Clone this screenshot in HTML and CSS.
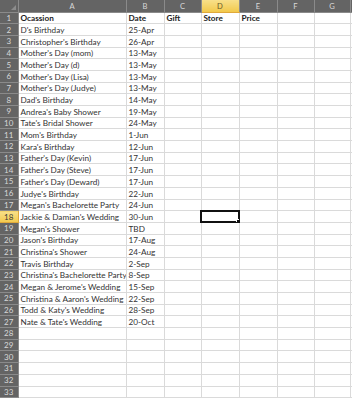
FILE: index.html
```html
<!DOCTYPE html>
<html lang="en">
<head>
    <meta charset="UTF-8">
    <title>Gift List</title>
    <link rel="stylesheet" href="styles.css">
</head>
<body>
    <table class="sheet">
        <colgroup>
            <col class="c-rh"><col class="c-a"><col class="c-b"><col class="c-c"><col class="c-d">
            <col class="c-e"><col class="c-f"><col class="c-g"><col class="c-h">
        </colgroup>
        <thead>
            <tr>
                <th class="corner"><span class="tri"></span></th>
                <th>A</th><th>B</th><th>C</th><th class="sel">D</th><th>E</th><th>F</th><th>G</th><th class="edge"></th>
            </tr>
        </thead>
        <tbody>
            <tr class="head"><th>1</th><td>Ocassion</td><td>Date</td><td>Gift</td><td>Store</td><td>Price</td><td></td><td class="brk"></td><td></td></tr>
            <tr><th>2</th><td>D's Birthday</td><td>25-Apr</td><td></td><td></td><td></td><td></td><td class="brk"></td><td></td></tr>
            <tr><th>3</th><td>Christopher's Birthday</td><td>26-Apr</td><td></td><td></td><td></td><td></td><td class="brk"></td><td></td></tr>
            <tr><th>4</th><td>Mother's Day (mom)</td><td>13-May</td><td></td><td></td><td></td><td></td><td class="brk"></td><td></td></tr>
            <tr><th>5</th><td>Mother's Day (d)</td><td>13-May</td><td></td><td></td><td></td><td></td><td class="brk"></td><td></td></tr>
            <tr><th>6</th><td>Mother's Day (Lisa)</td><td>13-May</td><td></td><td></td><td></td><td></td><td class="brk"></td><td></td></tr>
            <tr><th>7</th><td>Mother's Day (Judye)</td><td>13-May</td><td></td><td></td><td></td><td></td><td class="brk"></td><td></td></tr>
            <tr><th>8</th><td>Dad's Birthday</td><td>14-May</td><td></td><td></td><td></td><td></td><td class="brk"></td><td></td></tr>
            <tr><th>9</th><td>Andrea's Baby Shower</td><td>19-May</td><td></td><td></td><td></td><td></td><td class="brk"></td><td></td></tr>
            <tr><th>10</th><td>Tate's Bridal Shower</td><td>24-May</td><td></td><td></td><td></td><td></td><td class="brk"></td><td></td></tr>
            <tr><th>11</th><td>Mom's Birthday</td><td>1-Jun</td><td></td><td></td><td></td><td></td><td class="brk"></td><td></td></tr>
            <tr><th>12</th><td>Kara's Birthday</td><td>12-Jun</td><td></td><td></td><td></td><td></td><td class="brk"></td><td></td></tr>
            <tr><th>13</th><td>Father's Day (Kevin)</td><td>17-Jun</td><td></td><td></td><td></td><td></td><td class="brk"></td><td></td></tr>
            <tr><th>14</th><td>Father's Day (Steve)</td><td>17-Jun</td><td></td><td></td><td></td><td></td><td class="brk"></td><td></td></tr>
            <tr><th>15</th><td>Father's Day (Deward)</td><td>17-Jun</td><td></td><td></td><td></td><td></td><td class="brk"></td><td></td></tr>
            <tr><th>16</th><td>Judye's Birthday</td><td>22-Jun</td><td></td><td></td><td></td><td></td><td class="brk"></td><td></td></tr>
            <tr><th>17</th><td>Megan's Bachelorette Party</td><td>24-Jun</td><td></td><td></td><td></td><td></td><td class="brk"></td><td></td></tr>
            <tr><th class="sel">18</th><td>Jackie &amp; Damian's Wedding</td><td>30-Jun</td><td></td><td class="active"></td><td></td><td></td><td class="brk"></td><td></td></tr>
            <tr><th>19</th><td>Megan's Shower</td><td>TBD</td><td></td><td></td><td></td><td></td><td class="brk"></td><td></td></tr>
            <tr><th>20</th><td>Jason's Birthday</td><td>17-Aug</td><td></td><td></td><td></td><td></td><td class="brk"></td><td></td></tr>
            <tr><th>21</th><td>Christina's Shower</td><td>24-Aug</td><td></td><td></td><td></td><td></td><td class="brk"></td><td></td></tr>
            <tr><th>22</th><td>Travis Birthday</td><td>2-Sep</td><td></td><td></td><td></td><td></td><td class="brk"></td><td></td></tr>
            <tr><th>23</th><td>Christina's Bachelorette Party</td><td>8-Sep</td><td></td><td></td><td></td><td></td><td class="brk"></td><td></td></tr>
            <tr><th>24</th><td>Megan &amp; Jerome's Wedding</td><td>15-Sep</td><td></td><td></td><td></td><td></td><td class="brk"></td><td></td></tr>
            <tr><th>25</th><td>Christina &amp; Aaron's Wedding</td><td>22-Sep</td><td></td><td></td><td></td><td></td><td class="brk"></td><td></td></tr>
            <tr><th>26</th><td>Todd &amp; Katy's Wedding</td><td>28-Sep</td><td></td><td></td><td></td><td></td><td class="brk"></td><td></td></tr>
            <tr><th>27</th><td>Nate &amp; Tate's Wedding</td><td>20-Oct</td><td></td><td></td><td></td><td></td><td class="brk"></td><td></td></tr>
            <tr><th>28</th><td></td><td></td><td></td><td></td><td></td><td></td><td class="brk"></td><td></td></tr>
            <tr><th>29</th><td></td><td></td><td></td><td></td><td></td><td></td><td class="brk"></td><td></td></tr>
            <tr><th>30</th><td></td><td></td><td></td><td></td><td></td><td></td><td class="brk"></td><td></td></tr>
            <tr><th>31</th><td></td><td></td><td></td><td></td><td></td><td></td><td class="brk"></td><td></td></tr>
            <tr><th>32</th><td></td><td></td><td></td><td></td><td></td><td></td><td class="brk"></td><td></td></tr>
            <tr><th>33</th><td></td><td></td><td></td><td></td><td></td><td></td><td class="brk"></td><td></td></tr>
        </tbody>
    </table>
</body>
</html>
```
FILE: styles.css
```css
body {
    margin: 0;
    background: #fff;
    font-family: Lato, "Open Sans", sans-serif;
}
.sheet {
    width: 352px;
    table-layout: fixed;
    border-collapse: collapse;
    font-size: 8.2px;
    color: #333;
}
.c-rh { width: 18px; }
.c-a { width: 108px; }
.c-b { width: 38px; }
.c-c { width: 37px; }
.c-d { width: 38px; }
.c-e { width: 38px; }
.c-f { width: 37px; }
.c-g { width: 36px; }
.c-h { width: 2px; }

thead tr {
    height: 12px;
}
tbody tr {
    height: 11.7px;
}
th, td {
    padding: 0 0 0 2px;
    line-height: 10px;
    white-space: nowrap;
    overflow: hidden;
}
td {
    border: 1px solid #dadada;
    vertical-align: bottom;
}
thead th {
    background: #646464;
    color: #d8d8d8;
    font-weight: normal;
    font-size: 7.6px;
    text-align: center;
    padding: 0;
    border-right: 1px solid #8a8a8a;
    border-bottom: 1px solid #8a8a8a;
}
tbody th {
    background: #646464;
    color: #d8d8d8;
    font-weight: normal;
    font-size: 8px;
    text-align: center;
    padding: 0;
    border-bottom: 1px solid #8a8a8a;
    border-right: 1px solid #8a8a8a;
}
th.sel {
    background: linear-gradient(#f8e08a, #f2c94c);
    color: #6b5a2a;
    border-bottom-color: #e0a93a;
}
tbody th.sel {
    color: #3a3a3a;
    border-right-color: #e0a93a;
}
.corner {
    position: relative;
}
.tri {
    position: absolute;
    right: 2px;
    bottom: 2px;
    width: 0;
    height: 0;
    border-left: 5px solid transparent;
    border-bottom: 5px solid #8c8c8c;
}
thead th.edge {
    border-right: none;
}
.head td {
    font-weight: bold;
    color: #222;
}
td.brk {
    border-right: 1px dashed #555;
}
td.active {
    position: relative;
    outline: 2px solid #111;
    outline-offset: -1px;
}
td.active::after {
    content: "";
    position: absolute;
    right: -2px;
    bottom: -2px;
    width: 3px;
    height: 3px;
    background: #111;
    border: 1px solid #fff;
}
```
